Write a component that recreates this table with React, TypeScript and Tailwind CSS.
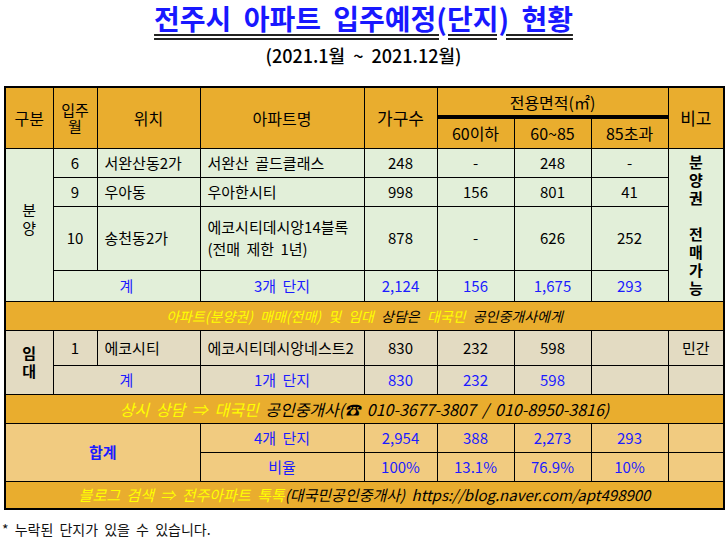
import React from "react";

const B = "border border-black";
const blue = "text-[#1c1cff]";
const yel = "text-[#ffff00]";

function N({ children, cls = "" }: { children?: React.ReactNode; cls?: string }) {
  return <td className={`${B} text-center align-middle p-0 ${cls}`}>{children}</td>;
}
function L({ children, cls = "" }: { children?: React.ReactNode; cls?: string }) {
  return <td className={`${B} text-left align-middle py-0 pl-[7px] pr-0 ${cls}`}>{children}</td>;
}

export default function App() {
  const green = "bg-[#e2efd9]";
  const beige = "bg-[#e3dbc2]";
  const sum = "bg-[#f1cb80]";
  const band = "bg-[#e9ad2e]";
  return (
    <div
      className="w-[727px] h-[541px] bg-white text-black overflow-hidden"
      style={{ fontFamily: '"Noto Sans CJK KR", "Noto Sans", sans-serif' }}
    >
      <div className="text-center pt-[0px] h-[43px]">
        <span className="text-[28px] leading-[36px] font-bold text-[#1818ff] underline decoration-double decoration-[#222] underline-offset-[4px] [word-spacing:6px]">
          전주시 아파트 입주예정(단지) 현황
        </span>
      </div>
      <div className="text-center text-[18px] leading-[24px] font-medium [word-spacing:4px]">
        (2021.1월 ~ 2021.12월)
      </div>
      <table className="mt-[19px] ml-[4px] table-fixed border-collapse border-2 border-black text-[15px] leading-[18px] w-[719px]">
        <colgroup>
          <col className="w-[48px]" />
          <col className="w-[44px]" />
          <col className="w-[103px]" />
          <col className="w-[164px]" />
          <col className="w-[73px]" />
          <col className="w-[77px]" />
          <col className="w-[77px]" />
          <col className="w-[77px]" />
          <col className="w-[56px]" />
        </colgroup>
        <thead className={`${band} text-[16px]`}>
          <tr className="h-[30px]">
            <td rowSpan={2} className={`${B} text-center align-middle p-0`}>구분</td>
            <td rowSpan={2} className={`${B} text-center align-middle p-0 text-[15px] leading-[16px]`}>
              입주
              <br />월
            </td>
            <td rowSpan={2} className={`${B} text-center align-middle p-0`}>위치</td>
            <td rowSpan={2} className={`${B} text-center align-middle p-0`}>아파트명</td>
            <td rowSpan={2} className={`${B} text-center align-middle p-0 text-[17px]`}>가구수</td>
            <td colSpan={3} className="border border-black border-b-[4px] border-b-double text-center align-middle p-0">
              전용면적(㎡)
            </td>
            <td rowSpan={2} className={`${B} text-center align-middle p-0 text-[17px]`}>비고</td>
          </tr>
          <tr className="h-[31px]">
            <N>60이하</N>
            <N>60~85</N>
            <N>85초과</N>
          </tr>
        </thead>
        <tbody>
          <tr className={`h-[29px] ${green}`}>
            <td rowSpan={4} className={`${B} text-center align-middle p-0 leading-[18px] pb-[12px]`}>
              분<br />양
            </td>
            <N>6</N>
            <L>서완산동2가</L>
            <L cls="[word-spacing:3px]">서완산 골드클래스</L>
            <N>248</N>
            <N>-</N>
            <N>248</N>
            <N>-</N>
            <td rowSpan={4} className={`${B} text-center align-middle p-0 font-bold leading-[18px]`}>
              분<br />양<br />권<br />
              <br />전<br />매<br />가<br />능
            </td>
          </tr>
          <tr className={`h-[29px] ${green}`}>
            <N>9</N>
            <L>우아동</L>
            <L>우아한시티</L>
            <N>998</N>
            <N>156</N>
            <N>801</N>
            <N>41</N>
          </tr>
          <tr className={`h-[64px] ${green}`}>
            <N>10</N>
            <L>송천동2가</L>
            <L cls="leading-[22px] [word-spacing:3px]">
              에코시티데시앙14블록
              <br />
              (전매 제한 1년)
            </L>
            <N>878</N>
            <N>-</N>
            <N>626</N>
            <N>252</N>
          </tr>
          <tr className={`h-[31px] ${green} ${blue}`}>
            <td colSpan={2} className={`${B} text-center align-middle p-0`}>계</td>
            <N cls="[word-spacing:3px]">3개 단지</N>
            <N>2,124</N>
            <N>156</N>
            <N>1,675</N>
            <N>293</N>
          </tr>
          <tr className={`h-[29px] ${band}`}>
            <td colSpan={9} className={`${B} text-center align-middle p-0 italic text-[14px] [word-spacing:4px]`}>
              <span className={yel}>아파트(분양권) 매매(전매) 및 임대 </span>
              <span>상담은 </span>
              <span className={yel}>대국민 </span>
              <span>공인중개사에게</span>
            </td>
          </tr>
          <tr className={`h-[35px] ${beige}`}>
            <td rowSpan={2} className={`${B} text-center align-middle p-0 font-bold leading-[18px]`}>
              임<br />대
            </td>
            <N>1</N>
            <L>에코시티</L>
            <L>에코시티데시앙네스트2</L>
            <N>830</N>
            <N>232</N>
            <N>598</N>
            <N></N>
            <N>민간</N>
          </tr>
          <tr className={`h-[29px] ${beige} ${blue}`}>
            <td colSpan={2} className={`${B} text-center align-middle p-0`}>계</td>
            <N cls="[word-spacing:3px]">1개 단지</N>
            <N>830</N>
            <N>232</N>
            <N>598</N>
            <N></N>
            <N></N>
          </tr>
          <tr className={`h-[29px] ${band}`}>
            <td colSpan={9} className={`${B} text-center align-middle p-0 italic text-[16px] [word-spacing:3px]`}>
              <span className={yel}>상시 상담 ⇒ 대국민 </span>
              <span>공인중개사(☎ 010-3677-3807 / 010-8950-3816)</span>
            </td>
          </tr>
          <tr className={`h-[29px] ${sum} ${blue}`}>
            <td colSpan={3} rowSpan={2} className={`${B} text-center align-middle p-0 font-semibold`}>
              합계
            </td>
            <N cls="[word-spacing:3px]">4개 단지</N>
            <N>2,954</N>
            <N>388</N>
            <N>2,273</N>
            <N>293</N>
            <N></N>
          </tr>
          <tr className={`h-[29px] ${sum} ${blue}`}>
            <N>비율</N>
            <N>100%</N>
            <N>13.1%</N>
            <N>76.9%</N>
            <N>10%</N>
            <N></N>
          </tr>
          <tr className={`h-[28px] ${band}`}>
            <td colSpan={9} className={`${B} text-center align-middle p-0 italic text-[15px] [word-spacing:3px]`}>
              <span className={yel}>블로그 검색 ⇒ 전주아파트 톡톡</span>
              <span>(대국민공인중개사) https://blog.naver.com/apt498900</span>
            </td>
          </tr>
        </tbody>
      </table>
      <div className="mt-[9px] pl-[2px] text-[14px] leading-[20px] text-[#111] [word-spacing:3px]">* 누락된 단지가 있을 수 있습니다.</div>
    </div>
  );
}
